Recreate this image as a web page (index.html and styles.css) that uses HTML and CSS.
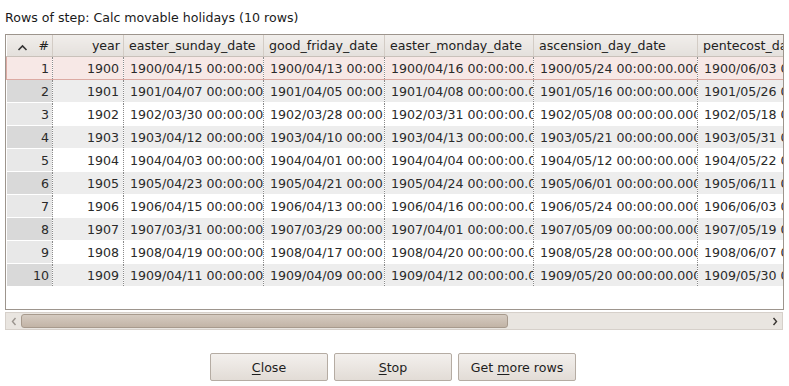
FILE: index.html
```html
<!DOCTYPE html>
<html>
<head>
<meta charset="utf-8">
<link rel="stylesheet" href="styles.css">
</head>
<body>
<div class="title">Rows of step: Calc movable holidays (10 rows)</div>
<div class="frame">
  <div class="grid">
    <table class="tbl">
      <colgroup>
        <col class="c0"><col class="c1"><col class="c2"><col class="c3"><col class="c4"><col class="c5"><col class="c6">
      </colgroup>
      <thead>
        <tr>
          <th class="hnum"><span class="chev"><svg width="11" height="7" viewBox="0 0 11 7"><path d="M1.5 6 L5.5 2 L9.5 6" fill="none" stroke="#333" stroke-width="1.6"/></svg></span><span>#</span></th>
          <th class="r">year</th>
          <th>easter_sunday_date</th>
          <th>good_friday_date</th>
          <th>easter_monday_date</th>
          <th>ascension_day_date</th>
          <th>pentecost_date</th>
        </tr>
      </thead>
      <tbody>
        <tr class="sel"><td class="n">1</td><td class="r">1900</td><td>1900/04/15 00:00:00.000</td><td>1900/04/13 00:00:00.000</td><td>1900/04/16 00:00:00.000</td><td>1900/05/24 00:00:00.000</td><td>1900/06/03 00:00:00.000</td></tr>
        <tr class="odd"><td class="n">2</td><td class="r">1901</td><td>1901/04/07 00:00:00.000</td><td>1901/04/05 00:00:00.000</td><td>1901/04/08 00:00:00.000</td><td>1901/05/16 00:00:00.000</td><td>1901/05/26 00:00:00.000</td></tr>
        <tr><td class="n">3</td><td class="r">1902</td><td>1902/03/30 00:00:00.000</td><td>1902/03/28 00:00:00.000</td><td>1902/03/31 00:00:00.000</td><td>1902/05/08 00:00:00.000</td><td>1902/05/18 00:00:00.000</td></tr>
        <tr class="odd"><td class="n">4</td><td class="r">1903</td><td>1903/04/12 00:00:00.000</td><td>1903/04/10 00:00:00.000</td><td>1903/04/13 00:00:00.000</td><td>1903/05/21 00:00:00.000</td><td>1903/05/31 00:00:00.000</td></tr>
        <tr><td class="n">5</td><td class="r">1904</td><td>1904/04/03 00:00:00.000</td><td>1904/04/01 00:00:00.000</td><td>1904/04/04 00:00:00.000</td><td>1904/05/12 00:00:00.000</td><td>1904/05/22 00:00:00.000</td></tr>
        <tr class="odd"><td class="n">6</td><td class="r">1905</td><td>1905/04/23 00:00:00.000</td><td>1905/04/21 00:00:00.000</td><td>1905/04/24 00:00:00.000</td><td>1905/06/01 00:00:00.000</td><td>1905/06/11 00:00:00.000</td></tr>
        <tr><td class="n">7</td><td class="r">1906</td><td>1906/04/15 00:00:00.000</td><td>1906/04/13 00:00:00.000</td><td>1906/04/16 00:00:00.000</td><td>1906/05/24 00:00:00.000</td><td>1906/06/03 00:00:00.000</td></tr>
        <tr class="odd"><td class="n">8</td><td class="r">1907</td><td>1907/03/31 00:00:00.000</td><td>1907/03/29 00:00:00.000</td><td>1907/04/01 00:00:00.000</td><td>1907/05/09 00:00:00.000</td><td>1907/05/19 00:00:00.000</td></tr>
        <tr><td class="n">9</td><td class="r">1908</td><td>1908/04/19 00:00:00.000</td><td>1908/04/17 00:00:00.000</td><td>1908/04/20 00:00:00.000</td><td>1908/05/28 00:00:00.000</td><td>1908/06/07 00:00:00.000</td></tr>
        <tr class="odd"><td class="n">10</td><td class="r">1909</td><td>1909/04/11 00:00:00.000</td><td>1909/04/09 00:00:00.000</td><td>1909/04/12 00:00:00.000</td><td>1909/05/20 00:00:00.000</td><td>1909/05/30 00:00:00.000</td></tr>
      </tbody>
    </table>
  </div>
  <div class="hscroll">
    <div class="arrow"><svg width="6" height="9" viewBox="0 0 6 9"><path d="M4.5 1 L1.5 4.5 L4.5 8" fill="none" stroke="#9a948e" stroke-width="1.4"/></svg></div>
    <div class="track"><div class="thumb"></div></div>
    <div class="arrow"><svg width="6" height="9" viewBox="0 0 6 9"><path d="M1.5 1 L4.5 4.5 L1.5 8" fill="none" stroke="#3a3632" stroke-width="1.4"/></svg></div>
  </div>
</div>
<div class="buttons">
  <button class="btn"><u>C</u>lose</button>
  <button class="btn"><u>S</u>top</button>
  <button class="btn">Get <u>m</u>ore rows</button>
</div>
</body>
</html>
```
FILE: styles.css
```css
html, body {
  margin: 0;
  padding: 0;
  background: #ffffff;
}
body {
  font-family: "DejaVu Sans", sans-serif;
  font-size: 12.6px;
  color: #1a1a1a;
  width: 789px;
  height: 386px;
  overflow: hidden;
}
.title {
  padding: 10px 0 0 5px;
  height: 24px;
  line-height: 16px;
  box-sizing: border-box;
}
.frame {
  margin-left: 5px;
  width: 779px;
}
.grid {
  height: 276px;
  border: 1px solid #9d958d;
  box-sizing: border-box;
  overflow: hidden;
  background: #fff;
  margin-top: 10px;
}
.tbl {
  border-collapse: collapse;
  table-layout: fixed;
  width: 880px;
}
.c0 { width: 46px; }
.c1 { width: 71px; }
.c2 { width: 140px; }
.c3 { width: 121px; }
.c4 { width: 149px; }
.c5 { width: 164px; }
.c6 { width: 189px; }
th {
  height: 21px;
  padding: 0 5px;
  font-weight: normal;
  text-align: left;
  white-space: nowrap;
  overflow: hidden;
  text-overflow: clip;
  background: linear-gradient(#f1eeeb, #e4e0dc);
  border-right: 1px solid #d3ccc5;
  border-bottom: 1px solid #c9c1ba;
  color: #222;
}
th.r { text-align: right; padding-right: 3px; }
.hnum {
  text-align: right;
  padding-right: 3px;
}
.hnum .chev {
  float: left;
  margin-left: 5px;
  margin-top: 1px;
}
td {
  height: 22px;
  padding: 0 3px 0 6px;
  white-space: nowrap;
  overflow: hidden;
  text-overflow: clip;
  border-right: 1px dotted #8a8a8a;
  border-bottom: 1px solid transparent;
  color: #2a2a2a;
}
td.r { text-align: right; padding-right: 4px; }
td.n {
  text-align: right;
  padding-right: 3px;
  background: #e8e8e8;
}
tr.odd td { background: #ededed; }
tr.odd td.n { background: #d9d9d9; }
tr.sel td {
  background: #f7e8e6;
  border-top: 1px solid #dcaaa3;
  border-bottom: 1px solid #dcaaa3;
}
tr.sel td:first-child { border-left: 1px solid #dcaaa3; }
.hscroll {
  display: flex;
  align-items: stretch;
  height: 18px;
  margin-top: 2px;
  background: #e9e5e0;
  border: 1px solid #d6d0ca;
  box-sizing: border-box;
  width: 778px;
}
.arrow {
  width: 15px;
  display: flex;
  align-items: center;
  justify-content: center;
}
.track {
  flex: 1;
  padding: 1px 0;
}
.thumb {
  width: 487px;
  height: 100%;
  box-sizing: border-box;
  border: 1px solid #a79a8d;
  border-radius: 3px;
  background: linear-gradient(#d5cbc1, #c2b4a6);
}
.buttons {
  display: flex;
  gap: 6px;
  margin: 23px 0 0 210px;
}
.btn {
  width: 118px;
  height: 28px;
  font-family: "DejaVu Sans", sans-serif;
  font-size: 12.6px;
  color: #1e1e1e;
  border: 1px solid #b5aca3;
  border-radius: 2px;
  background: linear-gradient(#f3f0ed, #e2dcd6);
  padding: 0;
}
.btn u { text-decoration: underline; text-underline-offset: 2px; }
```
